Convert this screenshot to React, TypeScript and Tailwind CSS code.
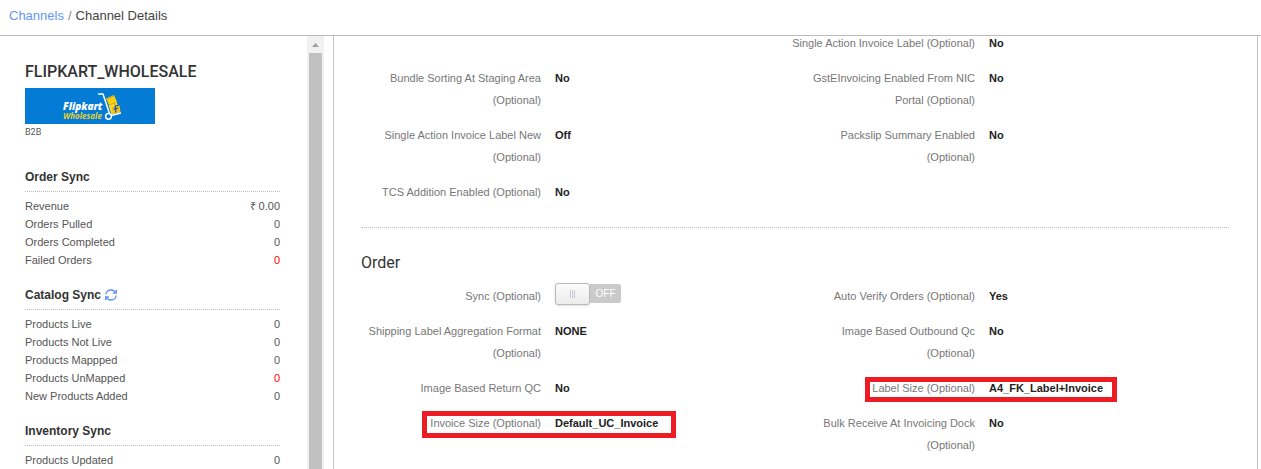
import React, { useState } from 'react';
import clsx from 'clsx';

interface Stat {
  label: string;
  value: string;
  alert?: boolean;
}

interface Setting {
  label: string;
  value?: string;
  toggle?: boolean;
  mark?: string;
}

const stats: { title: string; refresh?: boolean; rows: Stat[] }[] = [
  {
    title: 'Order Sync',
    rows: [
      { label: 'Revenue', value: '₹ 0.00' },
      { label: 'Orders Pulled', value: '0' },
      { label: 'Orders Completed', value: '0' },
      { label: 'Failed Orders', value: '0', alert: true },
    ],
  },
  {
    title: 'Catalog Sync',
    refresh: true,
    rows: [
      { label: 'Products Live', value: '0' },
      { label: 'Products Not Live', value: '0' },
      { label: 'Products Mappped', value: '0' },
      { label: 'Products UnMapped', value: '0', alert: true },
      { label: 'New Products Added', value: '0' },
    ],
  },
  {
    title: 'Inventory Sync',
    rows: [{ label: 'Products Updated', value: '0' }],
  },
];

const invoiceSettings: (Setting | null)[] = [
  null,
  { label: 'Single Action Invoice Label (Optional)', value: 'No' },
  { label: 'Bundle Sorting At Staging Area (Optional)', value: 'No' },
  { label: 'GstEInvoicing Enabled From NIC Portal (Optional)', value: 'No' },
  { label: 'Single Action Invoice Label New (Optional)', value: 'Off' },
  { label: 'Packslip Summary Enabled (Optional)', value: 'No' },
  { label: 'TCS Addition Enabled (Optional)', value: 'No' },
];

const orderSettings: (Setting | null)[] = [
  { label: 'Sync (Optional)', toggle: true },
  { label: 'Auto Verify Orders (Optional)', value: 'Yes' },
  { label: 'Shipping Label Aggregation Format (Optional)', value: 'NONE' },
  { label: 'Image Based Outbound Qc (Optional)', value: 'No' },
  { label: 'Image Based Return QC', value: 'No' },
  {
    label: 'Label Size (Optional)',
    value: 'A4_FK_Label+Invoice',
    mark: 'left-[74px] top-0 h-[25px] w-[252px]',
  },
  {
    label: 'Invoice Size (Optional)',
    value: 'Default_UC_Invoice',
    mark: 'left-[65px] -top-px h-[27px] w-[254px]',
  },
  { label: 'Bulk Receive At Invoicing Dock (Optional)', value: 'No' },
];

const ChannelLogo: React.FC = () => (
  <svg
    className="block h-9 w-[130px] bg-[#047bd5]"
    viewBox="0 0 130 36"
    role="img"
    aria-label="Flipkart Wholesale"
  >
    <g fontFamily="'Open Sans', sans-serif" fontStyle="italic">
      <text x="38" y="22" fontSize="10" fontWeight="800" fill="#fff">Flipkart</text>
      <text x="38" y="31" fontSize="8" fontWeight="700" fill="#e6cf2e">Wholesale</text>
    </g>
    <path d="M81 10.5 89 7l3 7-8 3z" fill="#f9cf13" />
    <path d="m83.500 17 8-3.500 3.500 10.500-8.500 2z" fill="#fddc31" />
    <path d="m82 11 7-3M84 17l8-3M89 15l3 10" stroke="#c49a12" strokeWidth=".7" fill="none" />
    <path d="m86.500 19 8-1.500 1 7-8 1.500z" fill="#f6bf0c" />
    <path d="M93 17.500c-2-.5-3 .5-2.700 2.500l.7 4.500M88.800 21l4-.8" stroke="#1b5ca8" strokeWidth="1.300" fill="none" />
    <path d="M73 6h5l6.500 19.500" stroke="#fff" strokeWidth="1.500" fill="none" strokeLinejoin="round" />
    <path d="m86 27.500 10-2.500" stroke="#fff" strokeWidth="1.500" />
    <circle cx="83.500" cy="28.300" r="2.900" fill="#047bd5" stroke="#fff" strokeWidth="1.500" />
  </svg>
);

const RefreshIcon: React.FC = () => (
  <svg className="h-3 w-3" viewBox="0 0 12 12" fill="none" stroke="#5b8ff5" strokeWidth="1.300">
    <path d="M1 5.500C1 2.800 3.200 1 6 1c2 0 3.600.9 4.500 2.600" />
    <path d="M11.300.8v3.400H8" />
    <path d="M11 6.500C11 9.200 8.800 11 6 11c-2 0-3.600-.9-4.500-2.600" />
    <path d="M.7 11.200V7.800H4" />
  </svg>
);

const SyncToggle: React.FC<{ id: string }> = ({ id }) => {
  const [on, setOn] = useState(false);

  return (
    <span className="relative -mt-0.5 flex h-[22px] w-[66px] items-start">
      <span className="h-[22px] w-[35px] shrink-0 rounded-[3px] border border-[#b8b8b8] bg-linear-to-b from-[#fbfbfb] to-[#ececec] shadow-sm">
        <span className="mx-auto mt-1.5 flex h-2 w-[5px] justify-between">
          <span className="w-px bg-[#c6c6d6]" />
          <span className="w-px bg-[#c6c6d6]" />
          <span className="w-px bg-[#c6c6d6]" />
        </span>
      </span>
      <span className="mt-px h-[19px] grow rounded-r-[2px] bg-[#cacaca] text-center text-[10px] leading-[19px] font-normal text-white">
        {on ? 'ON' : 'OFF'}
      </span>
      <input
        id={id}
        type="checkbox"
        checked={on}
        onChange={(e) => setOn(e.target.checked)}
        className="absolute inset-0 h-full w-full cursor-pointer opacity-0"
      />
    </span>
  );
};

const SettingsGrid: React.FC<{ items: (Setting | null)[] }> = ({ items }) => (
  <dl className="mr-1 -ml-1 grid grid-cols-2 gap-y-[13px] text-[11px] leading-[22px]">
    {items.map((item, i) =>
      item ? (
        <div key={item.label} className="relative flex gap-[14px]">
          <dt className="w-[184px] shrink-0 text-right text-[#777]">
            {item.toggle ? <label htmlFor="order-sync">{item.label}</label> : item.label}
          </dt>
          <dd className="font-bold text-[#222]">
            {item.toggle ? <SyncToggle id="order-sync" /> : item.value}
          </dd>
          {item.mark && (
            <span className={clsx('pointer-events-none absolute border-[5px] border-[#ed1c24]', item.mark)} />
          )}
        </div>
      ) : (
        <div key={i} />
      )
    )}
  </dl>
);

const Sidebar: React.FC = () => (
  <aside className="flex w-[324px] shrink-0">
    <div className="min-w-0 grow overflow-hidden pt-[26px] pr-[27px] pl-[25px]">
      <h1 className="font-[Roboto,sans-serif] text-base leading-5 font-medium text-[#333]">
        FLIPKART_WHOLESALE
      </h1>
      <div className="mt-1.5">
        <ChannelLogo />
      </div>
      <p className="mt-0.5 mb-[29px] font-[Roboto,sans-serif] text-[9px] leading-3 text-[#555]">B2B</p>
      {stats.map((group) => (
        <section key={group.title} className="mb-4">
          <h2 className="flex items-center gap-1 border-b border-dotted border-[#bbb] pb-1 text-xs leading-5 font-bold text-[#333]">
            {group.title}
            {group.refresh && (
              <button type="button" aria-label="Refresh catalog sync" className="cursor-pointer">
                <RefreshIcon />
              </button>
            )}
          </h2>
          <dl className="pt-[5px] text-[11px] leading-[18px] text-[#555]">
            {group.rows.map((row) => (
              <div key={row.label} className="flex justify-between">
                <dt>{row.label}</dt>
                <dd className={clsx(row.alert && 'text-[#f00]')}>{row.value}</dd>
              </div>
            ))}
          </dl>
        </section>
      ))}
    </div>
    <div className="flex w-[17px] shrink-0 flex-col items-center bg-[#f1f1f1]">
      <span className="flex h-[17px] items-center">
        <svg className="h-1 w-[7px]" viewBox="0 0 7 4" fill="#a0a0a0">
          <path d="M3.500 0 7 4H0z" />
        </svg>
      </span>
      <span className="w-[13px] grow bg-[#c1c1c1]" />
    </div>
  </aside>
);

export default function App() {
  return (
    <div className="flex h-screen flex-col overflow-hidden bg-white font-['Liberation_Sans',Arial,sans-serif]">
      <nav
        aria-label="Breadcrumb"
        className="flex shrink-0 gap-1 border-b border-[#bbb] px-[9px] pt-1.5 pb-[9px] text-[13px] leading-5 text-[#444]"
      >
        <a href="#channels" className="text-[#6495f5]">Channels</a>
        <span className="text-[#888]">/</span>
        <span>Channel Details</span>
      </nav>
      <div className="flex min-h-0 grow">
        <Sidebar />
        <main className="mr-[3px] ml-[9px] min-w-0 grow overflow-hidden border-x border-[#c4c4c4] pr-7 pl-[27px]">
          <section className="-mt-1 border-b border-dotted border-[#bbb] pb-6">
            <SettingsGrid items={invoiceSettings} />
          </section>
          <section className="pt-[25px]">
            <h2 className="mb-3 font-[Roboto,sans-serif] text-base leading-5 text-[#333]">Order</h2>
            <SettingsGrid items={orderSettings} />
          </section>
        </main>
      </div>
    </div>
  );
}
